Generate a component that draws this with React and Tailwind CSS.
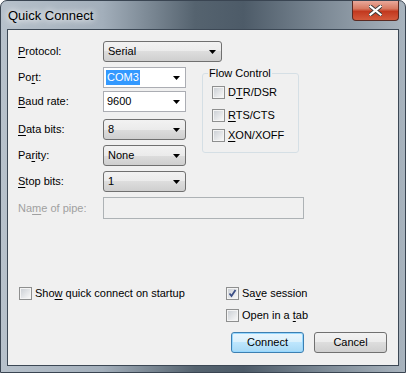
import React from "react";

const Arrow = () => (
  <svg width="7" height="4" viewBox="0 0 7 4" className="shrink-0">
    <path d="M0 0h7L3.5 4z" fill="#000" />
  </svg>
);

const Combo = ({ w, value, editable, selected }) => {
  if (editable) {
    return (
      <div
        className={`${w} h-[21px] flex items-center justify-between border border-[#abadb3] bg-white pl-[2px] pr-[5px]`}
      >
        <span className={selected ? "bg-[#3399ff] text-white px-[1px] leading-[15px]" : "px-[1px]"}>{value}</span>
        <Arrow />
      </div>
    );
  }
  return (
    <div
      className={`${w} h-[21px] flex items-center justify-between rounded-[3px] border border-[#707070] bg-[linear-gradient(#f2f2f2_0%,#ebebeb_50%,#dddddd_50%,#cfcfcf_100%)] pl-[4px] pr-[5px]`}
    >
      <span>{value}</span>
      <Arrow />
    </div>
  );
};

const Check = ({ checked }) => (
  <div className="w-[13px] h-[13px] shrink-0 border border-[#8e8f8f] bg-[#f4f4f4] p-[1px]">
    <div className="w-full h-full bg-[linear-gradient(135deg,#cdd1d6,#f7f7f7)] flex items-center justify-center">
      {checked && (
        <svg width="9" height="9" viewBox="0 0 9 9">
          <path d="M1.5 4.5L3.5 7L7.5 1" stroke="#3c4f86" strokeWidth="1.8" fill="none" />
        </svg>
      )}
    </div>
  </div>
);

const CheckRow = ({ checked, children, className = "" }) => (
  <div className={`flex items-center gap-[3px] ${className}`}>
    <Check checked={checked} />
    <span className="leading-[13px]">{children}</span>
  </div>
);

const Row = ({ label, children, className = "", disabled }) => (
  <div className={`flex items-center ${className}`}>
    <span className={`w-[85px] shrink-0 ${disabled ? "text-[#a0a0a0]" : ""}`}>{label}</span>
    {children}
  </div>
);

const Btn = ({ children, primary }) => (
  <div
    className={`w-[73px] h-[21px] flex items-center justify-center rounded-[3px] border ${
      primary
        ? "border-[#3c7fb1] bg-[linear-gradient(#eaf6fd_0%,#d9f0fc_50%,#bee6fd_50%,#a7d9f5_100%)] shadow-[inset_0_0_0_1px_#97d8ff]"
        : "border-[#707070] bg-[linear-gradient(#f2f2f2_0%,#ebebeb_50%,#dddddd_50%,#cfcfcf_100%)]"
    }`}
  >
    {children}
  </div>
);

const U = ({ children }) => <span className="underline underline-offset-2">{children}</span>;

export default function App() {
  return (
    <div className="w-[406px] h-[373px] rounded-t-[7px] border border-[#3a4552] bg-[linear-gradient(90deg,#b7c1cb_0%,#a3afbb_25%,#55636f_48%,#4d5b68_60%,#7d8a96_80%,#a9b4be_100%)] font-['Liberation_Sans',sans-serif] text-[11px] text-black overflow-hidden">
      {/* Title bar */}
      <div className="h-[28px] flex items-start justify-between">
        <span className="pl-[7px] pt-[7px] text-[13px] leading-[15px] [text-shadow:0_0_6px_#fff,0_0_8px_#fff]">Quick Connect</span>
        <div className="mr-[6px] w-[47px] h-[20px] rounded-b-[4px] border border-t-0 border-[#5a2a22] bg-[linear-gradient(#e9a99b_0%,#d77a62_40%,#c2391f_55%,#d45a3c_100%)] flex items-center justify-center">
          <svg width="13" height="11" viewBox="0 0 13 11">
            <path d="M1.5 1.5L11.5 9.5M11.5 1.5L1.5 9.5" stroke="#3a3a3a" strokeWidth="4" strokeLinecap="square" />
            <path d="M1.5 1.5L11.5 9.5M11.5 1.5L1.5 9.5" stroke="#fff" strokeWidth="2.2" strokeLinecap="square" />
          </svg>
        </div>
      </div>

      {/* Client area */}
      <div className="mx-[6px] h-[337px] border border-[#3c4855] bg-[#f0f0f0] pl-[10px] pt-[11px]">
        <Row label={<><U>P</U>rotocol:</>}>
          <Combo w="w-[119px]" value="Serial" />
        </Row>

        <div className="flex mt-[5px]">
          <div className="w-[184px]">
            <Row label={<>Po<U>r</U>t:</>}>
              <Combo w="w-[83px]" value="COM3" editable selected />
            </Row>
            <Row label={<><U>B</U>aud rate:</>} className="mt-[3px]">
              <Combo w="w-[83px]" value="9600" editable />
            </Row>
            <Row label={<><U>D</U>ata bits:</>} className="mt-[7px]">
              <Combo w="w-[83px]" value="8" />
            </Row>
            <Row label={<>Pa<U>r</U>ity:</>} className="mt-[5px]">
              <Combo w="w-[83px]" value="None" />
            </Row>
            <Row label={<><U>S</U>top bits:</>} className="mt-[5px]">
              <Combo w="w-[83px]" value="1" />
            </Row>
          </div>

          <fieldset className="w-[97px] h-[86px] border border-[#d5dfe5] rounded-[3px] pl-[5px] pr-0 pb-0 mt-0">
            <legend className="px-[1px] leading-[13px]">Flow Control</legend>
            <CheckRow className="ml-[4px] mt-[6px]">
              D<U>T</U>R/DSR
            </CheckRow>
            <CheckRow className="ml-[4px] mt-[10px]">
              <U>R</U>TS/CTS
            </CheckRow>
            <CheckRow className="ml-[4px] mt-[7px]">
              <U>X</U>ON/XOFF
            </CheckRow>
          </fieldset>
        </div>

        <Row label={<>Na<U>m</U>e of pipe:</>} className="mt-[5px]" disabled>
          <div className="w-[201px] h-[22px] border border-[#adb2b5] bg-[#f0f0f0]" />
        </Row>

        <div className="flex mt-[68px]">
          <CheckRow className="ml-[1px] w-[207px]">
            Sho<U>w</U> quick connect on startup
          </CheckRow>
          <CheckRow checked>
            Sa<U>v</U>e session
          </CheckRow>
        </div>
        <CheckRow className="ml-[208px] mt-[9px]">
          Open in a <U>t</U>ab
        </CheckRow>

        <div className="flex justify-end gap-[10px] mr-[11px] mt-[10px]">
          <Btn primary>Connect</Btn>
          <Btn>Cancel</Btn>
        </div>
      </div>
    </div>
  );
}
